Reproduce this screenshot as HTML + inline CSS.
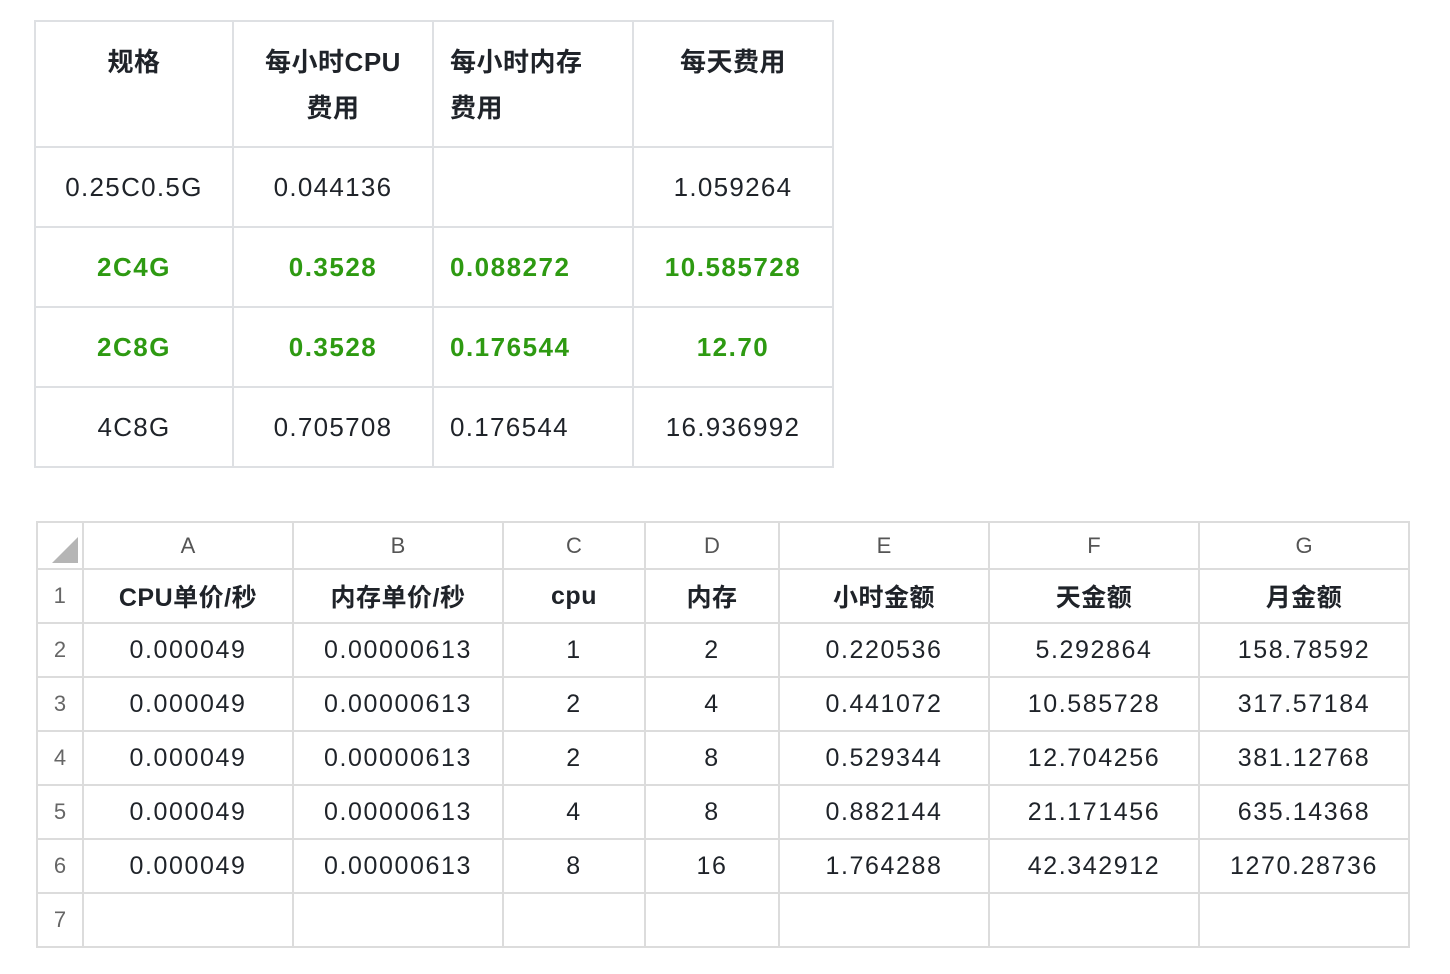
<!DOCTYPE html>
<html><head><meta charset="utf-8"><style>
body{margin:0;background:#fff;width:1450px;height:974px;position:relative;font-family:"Liberation Sans","Noto Sans CJK SC",sans-serif;color:#1f2329;}
table{border-collapse:collapse;position:absolute;table-layout:fixed;}
#t1{left:34px;top:20px;}
#t1 td{border:2px solid #dee0e3;font-size:26px;letter-spacing:1.3px;text-align:center;height:80px;padding:0;box-sizing:border-box;}
#t1 tr.h td{height:126px;vertical-align:top;font-weight:bold;line-height:46px;padding-top:17px;letter-spacing:0.5px;}
#t1 .l{text-align:left;padding-left:16px !important;}
#t1 tr.g td{color:#2e9a12;font-weight:bold;letter-spacing:1.5px;}
#t2{left:36px;top:521px;}
#t2 td{border:2px solid #dcdcdc;font-size:25px;letter-spacing:1.6px;text-align:center;height:54px;padding:0;box-sizing:border-box;}
#t2 tr.hd td{height:47px;color:#555;font-size:22px;letter-spacing:0;}
#t2 td.n{color:#666;font-size:22px;letter-spacing:0;}
#t2 tr.b td{font-weight:bold;letter-spacing:0.5px;}
</style></head><body>
<table id="t1">
<colgroup><col style="width:198px"><col style="width:200px"><col style="width:200px"><col style="width:200px"></colgroup>
<tr class="h"><td>规格</td><td>每小时CPU<br>费用</td><td class="l">每小时内存<br>费用</td><td>每天费用</td></tr>
<tr><td>0.25C0.5G</td><td>0.044136</td><td></td><td>1.059264</td></tr>
<tr class="g"><td>2C4G</td><td>0.3528</td><td class="l">0.088272</td><td>10.585728</td></tr>
<tr class="g"><td>2C8G</td><td>0.3528</td><td class="l">0.176544</td><td>12.70</td></tr>
<tr><td>4C8G</td><td>0.705708</td><td class="l">0.176544</td><td>16.936992</td></tr>
</table>
<table id="t2">
<colgroup><col style="width:46px"><col style="width:210px"><col style="width:210px"><col style="width:142px"><col style="width:134px"><col style="width:210px"><col style="width:210px"><col style="width:210px"></colgroup>
<tr class="hd"><td style="position:relative"><svg width="26" height="26" style="position:absolute;left:14px;top:14px"><polygon points="26,0 26,26 0,26" fill="#b5b5b5"/></svg></td><td>A</td><td>B</td><td>C</td><td>D</td><td>E</td><td>F</td><td>G</td></tr>
<tr class="b"><td class="n" style="font-weight:normal">1</td><td>CPU单价/秒</td><td>内存单价/秒</td><td>cpu</td><td>内存</td><td>小时金额</td><td>天金额</td><td>月金额</td></tr>
<tr><td class="n">2</td><td>0.000049</td><td>0.00000613</td><td>1</td><td>2</td><td>0.220536</td><td>5.292864</td><td>158.78592</td></tr>
<tr><td class="n">3</td><td>0.000049</td><td>0.00000613</td><td>2</td><td>4</td><td>0.441072</td><td>10.585728</td><td>317.57184</td></tr>
<tr><td class="n">4</td><td>0.000049</td><td>0.00000613</td><td>2</td><td>8</td><td>0.529344</td><td>12.704256</td><td>381.12768</td></tr>
<tr><td class="n">5</td><td>0.000049</td><td>0.00000613</td><td>4</td><td>8</td><td>0.882144</td><td>21.171456</td><td>635.14368</td></tr>
<tr><td class="n">6</td><td>0.000049</td><td>0.00000613</td><td>8</td><td>16</td><td>1.764288</td><td>42.342912</td><td>1270.28736</td></tr>
<tr><td class="n">7</td><td></td><td></td><td></td><td></td><td></td><td></td><td></td></tr>
</table>
</body></html>
